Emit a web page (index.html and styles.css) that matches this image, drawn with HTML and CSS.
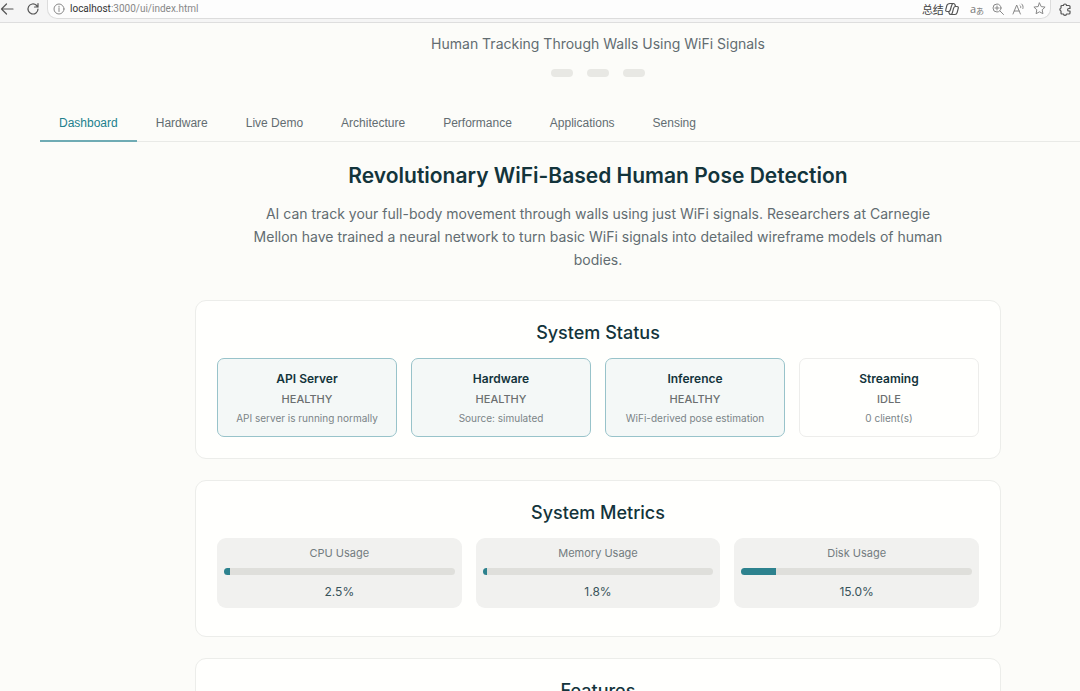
FILE: index.html
```html
<!DOCTYPE html>
<html lang="en">
<head>
  <meta charset="UTF-8">
  <meta name="viewport" content="width=device-width, initial-scale=1.0">
  <title>WiFi DensePose</title>
  <link rel="stylesheet" href="styles.css">
</head>
<body>

<!-- Browser bar -->
<div class="browser-bar">
  <button class="bar-btn" aria-label="Back">
    <svg width="14" height="14" viewBox="0 0 14 14"><path d="M13 7H1.5M6.5 2L1.5 7l5 5"/></svg>
  </button>
  <button class="bar-btn" aria-label="Reload">
    <svg width="14" height="14" viewBox="0 0 14 14"><path d="M12 7a5 5 0 1 1-1.6-3.700L12 5M12 1.500V5H8.500"/></svg>
  </button>
  <div class="address">
    <svg class="info" width="12" height="12" viewBox="0 0 12 12"><circle cx="6" cy="6" r="5"/><path d="M6 5.3v3.2M6 3.2v1"/></svg>
    <span class="url"><b>localhost</b>:3000/ui/index.html</span>
    <button class="bar-btn summary">
      <span>总结</span>
      <svg width="14" height="14" viewBox="0 0 14 14"><path d="M5 1.500h3.500c1 0 1.300.5 1.600 1.500l.4 1.500H12c1.200 0 1.500.8 1.200 1.800l-1 4c-.4 1.500-1 2.200-2.200 2.200H5.800c-1 0-1.400-.5-1.700-1.500L3.700 9.500H2C.9 9.500.5 8.700.8 7.700l1-4C2.200 2.200 3 1.500 5 1.500zM8.500 1.500c-1.200 0-1.600.8-1.900 2L5.300 8C5 9 4.600 9.500 3.700 9.500M10.500 4.500c-1.200 0-1.600.6-1.900 1.600l-1.200 4.500c-.3 1.200-.7 1.900-1.600 1.900"/></svg>
    </button>
    <button class="bar-btn translate" aria-label="Translate">a<small>あ</small></button>
    <button class="bar-btn light" aria-label="Zoom">
      <svg width="12" height="12" viewBox="0 0 12 12"><circle cx="5" cy="5" r="4"/><path d="M8 8l3.500 3.500M3 5h4M5 3v4"/></svg>
    </button>
    <button class="bar-btn light" aria-label="Read aloud">
      <svg width="13" height="12" viewBox="0 0 13 12"><path d="M1 11L4.700 2l3.700 9M2.200 8h5M8 2.500c.7.500.9 1.300.7 2.200M9.700 1c1.300 1.100 1.700 2.700 1.200 4.500"/></svg>
    </button>
    <button class="bar-btn light" aria-label="Favorite">
      <svg width="13" height="13" viewBox="0 0 13 13"><path d="M6.500 1l1.700 3.600 3.900.5-2.900 2.700.7 3.900-3.400-1.900-3.400 1.900.7-3.900L.9 5.100l3.900-.5z"/></svg>
    </button>
  </div>
  <button class="bar-btn" aria-label="Extensions">
    <svg width="13" height="13" viewBox="0 0 13 13"><path d="M4.500 2.500c0-2 3-2 3 0H10c.6 0 1 .4 1 1V5.500H9.800c-1.600 0-1.600 2.500 0 2.500H11v2c0 .6-.4 1-1 1H7.500c0 1.700-3 1.700-3 0H3c-.6 0-1-.4-1-1V8C.5 7.500.5 5.500 2 5V3.500c0-.6.4-1 1-1z"/></svg>
  </button>
</div>

<div class="container">
  <header class="header">
    <p class="subtitle">Human Tracking Through Walls Using WiFi Signals</p>
    <div class="header-info">
      <span class="pill"></span>
      <span class="pill"></span>
      <span class="pill"></span>
    </div>
  </header>

  <nav class="nav-tabs">
    <button class="nav-tab active">Dashboard</button>
    <button class="nav-tab">Hardware</button>
    <button class="nav-tab">Live Demo</button>
    <button class="nav-tab">Architecture</button>
    <button class="nav-tab">Performance</button>
    <button class="nav-tab">Applications</button>
    <button class="nav-tab">Sensing</button>
  </nav>

  <main class="dashboard">
    <h2>Revolutionary WiFi-Based Human Pose Detection</h2>
    <p class="hero-description">AI can track your full-body movement through walls using just WiFi signals. Researchers at Carnegie Mellon have trained a neural network to turn basic WiFi signals into detailed wireframe models of human bodies.</p>

    <section class="panel">
      <h3>System Status</h3>
      <div class="status-grid">
        <div class="status-card healthy">
          <h4>API Server</h4>
          <p class="state">HEALTHY</p>
          <p class="message">API server is running normally</p>
        </div>
        <div class="status-card healthy">
          <h4>Hardware</h4>
          <p class="state">HEALTHY</p>
          <p class="message">Source: simulated</p>
        </div>
        <div class="status-card healthy">
          <h4>Inference</h4>
          <p class="state">HEALTHY</p>
          <p class="message">WiFi-derived pose estimation</p>
        </div>
        <div class="status-card">
          <h4>Streaming</h4>
          <p class="state">IDLE</p>
          <p class="message">0 client(s)</p>
        </div>
      </div>
    </section>

    <section class="panel metrics">
      <h3>System Metrics</h3>
      <div class="metrics-grid">
        <div class="metric">
          <p class="metric-label">CPU Usage</p>
          <div class="progress"><div class="progress-fill" style="width: 2.5%"></div></div>
          <p class="metric-value">2.5%</p>
        </div>
        <div class="metric">
          <p class="metric-label">Memory Usage</p>
          <div class="progress"><div class="progress-fill" style="width: 1.8%"></div></div>
          <p class="metric-value">1.8%</p>
        </div>
        <div class="metric">
          <p class="metric-label">Disk Usage</p>
          <div class="progress"><div class="progress-fill" style="width: 15%"></div></div>
          <p class="metric-value">15.0%</p>
        </div>
      </div>
    </section>

    <section class="panel">
      <h3>Features</h3>
    </section>
  </main>
</div>

</body>
</html>
```
FILE: styles.css
```css
* {
  margin: 0;
  padding: 0;
  box-sizing: border-box;
}

body {
  font-family: Inter, 'Liberation Sans', sans-serif;
  background: #fcfcf9;
  color: #13343b;
}

button {
  border: none;
  background: none;
  font-family: inherit;
  cursor: pointer;
}

/* Browser bar */
.browser-bar {
  display: flex;
  align-items: center;
  gap: 12px;
  height: 23px;
  padding: 0 8px 4px 0;
  background: #f5f5f5;
  border-bottom: 1px solid #dedede;
}

.bar-btn {
  display: flex;
  align-items: center;
  color: #444;
}

.browser-bar svg {
  fill: none;
  stroke: #555;
  stroke-width: 1.2;
  stroke-linecap: round;
  stroke-linejoin: round;
}

.browser-bar .light svg,
.browser-bar .info {
  stroke: #888;
  stroke-width: 1;
}

.address {
  flex: 1;
  display: flex;
  align-items: center;
  gap: 8px;
  height: 20px;
  margin: 0 -4px 0 -5px;
  padding: 0 4px 0 5px;
  background: #fdfdfd;
  border: 1px solid #dcdcdc;
  border-top: none;
  border-radius: 0 0 10px 10px;
}

.url {
  flex: 1;
  margin-left: -3px;
  font-family: Roboto, sans-serif;
  font-size: 10px;
  color: #888;
}

.url b {
  font-weight: 400;
  color: #333;
}

.summary {
  gap: 1px;
  margin-right: 3px;
  font-family: 'Noto Sans CJK SC', sans-serif;
  font-size: 11px;
}

.translate {
  font-family: 'Open Sans', 'Noto Sans CJK JP', sans-serif;
  font-size: 11px;
  color: #777;
}

.translate small {
  padding-top: 3px;
  font-size: 8px;
}

/* Page */
.container {
  padding-left: 40px;
}

.header,
.dashboard {
  padding-left: 76px;
  text-align: center;
}

.header {
  padding-top: 10px;
}

.subtitle {
  font-size: 14px;
  line-height: 22px;
  color: #626c71;
}

.header-info {
  display: flex;
  justify-content: center;
  gap: 14px;
  margin-top: 14px;
}

.pill {
  width: 22px;
  height: 8px;
  border-radius: 4px;
  background: #e8e8e4;
}

/* Tabs */
.nav-tabs {
  display: flex;
  margin-top: 28px;
  border-bottom: 1px solid #e9eae7;
}

.nav-tab {
  padding: 9px 19px 8px;
  margin-bottom: -1px;
  border-bottom: 2px solid transparent;
  font-family: 'Liberation Sans', sans-serif;
  font-size: 12px;
  line-height: 18px;
  color: #626c71;
}

.nav-tab.active {
  color: #21808d;
  border-bottom-color: #6fabb4;
}

/* Dashboard */
.dashboard {
  padding-top: 20px;
}

.dashboard h2 {
  font-size: 21px;
  font-weight: 600;
  line-height: 28px;
}

.hero-description {
  max-width: 700px;
  margin: 12px auto 29px;
  font-size: 14px;
  line-height: 23px;
  color: #626c71;
}

.panel {
  max-width: 806px;
  margin: 0 auto 21px;
  padding: 21px;
  background: #fffffd;
  border: 1px solid #ecedea;
  border-radius: 11px;
}

.panel h3 {
  margin-bottom: 15px;
  font-size: 18px;
  font-weight: 500;
  line-height: 21px;
}

.status-grid,
.metrics-grid {
  display: grid;
  grid-template-columns: repeat(4, 1fr);
  gap: 14px;
}

.status-card {
  padding: 11px 8px 10px;
  border: 1px solid #ededeb;
  border-radius: 7px;
}

.status-card.healthy {
  background: #f4f8f7;
  border-color: #98c3ca;
}

.status-card h4 {
  margin-bottom: 3px;
  font-size: 12px;
  font-weight: 600;
  line-height: 18px;
}

.state {
  margin-bottom: 3px;
  font-size: 11px;
  font-weight: 500;
  line-height: 16px;
  color: #6b6f70;
}

.message {
  font-size: 10px;
  line-height: 16px;
  color: #7b8487;
}

.metrics {
  padding-bottom: 28px;
}

.metrics-grid {
  grid-template-columns: repeat(3, 1fr);
}

.metric {
  padding: 7px;
  background: #f1f1ef;
  border-radius: 9px;
}

.metric-label {
  font-size: 11px;
  line-height: 16px;
  color: #737c80;
}

.progress {
  height: 7px;
  margin: 7px 0;
  overflow: hidden;
  background: #dfdfdb;
  border-radius: 4px;
}

.progress-fill {
  height: 100%;
  background: #2d828e;
}

.metric-value {
  font-size: 12px;
  line-height: 19px;
  color: #38535a;
}
```
